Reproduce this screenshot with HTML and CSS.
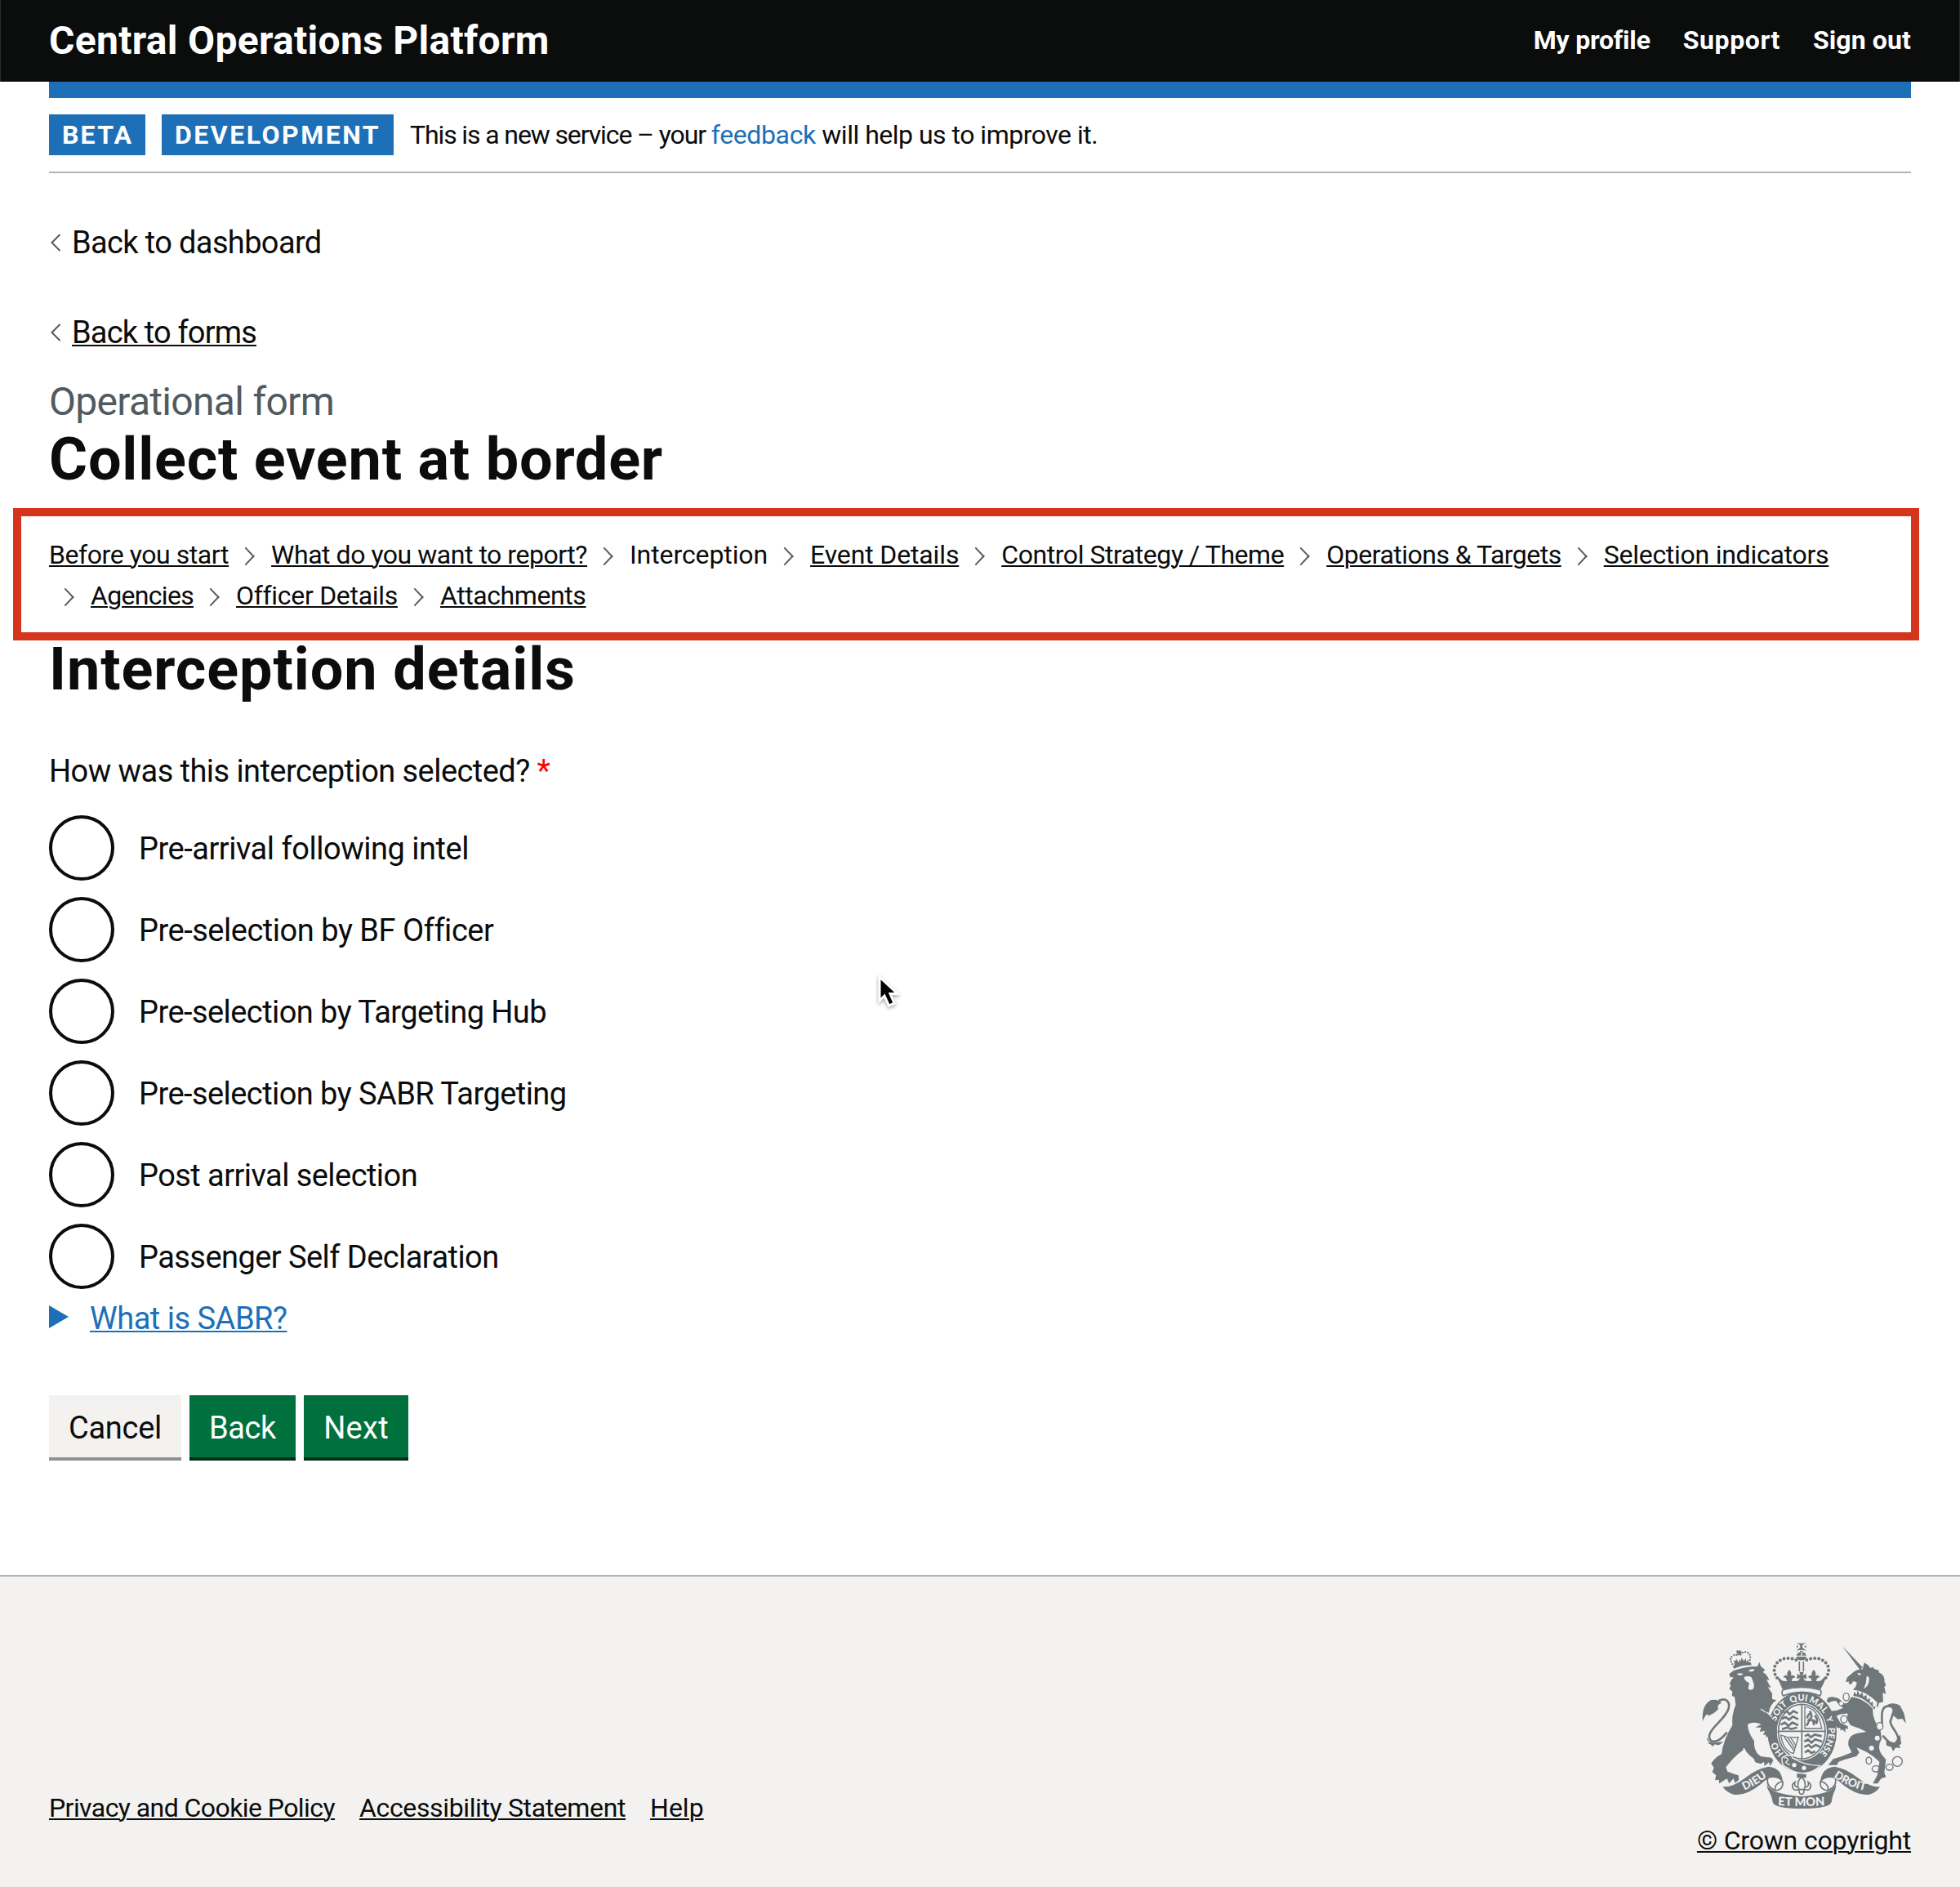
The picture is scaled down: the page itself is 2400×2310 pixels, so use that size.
FILE: index.html
```html
<!DOCTYPE html>
<html lang="en">
<head>
<meta charset="utf-8">
<title>Central Operations Platform</title>
<link rel="stylesheet" href="styles.css">
</head>
<body>
<header class="header">
  <a class="brand">Central Operations Platform</a>
  <nav class="nav"><a>My profile</a><a>Support</a><a>Sign out</a></nav>
</header>
<div class="container">
  <div class="header-bar"></div>
  <div class="phase">
    <strong class="tag tag-beta">BETA</strong>
    <strong class="tag tag-dev">DEVELOPMENT</strong>
    <span class="phase-text">This is a new service – your <a>feedback</a><span class="phase-end"> will help us to improve it.</span></span>
  </div>
  <main>
    <div class="back back-dashboard"><svg class="chev" viewBox="0 0 14 22"><path d="M12.5 1 2.5 11l10 10"/></svg><a>Back to dashboard</a></div>
    <div class="back back-forms"><svg class="chev" viewBox="0 0 14 22"><path d="M12.5 1 2.5 11l10 10"/></svg><a>Back to forms</a></div>
    <div class="caption">Operational form</div>
    <h1 class="title">Collect event at border</h1>
    <nav class="crumbs">
      <div class="crumb-row">
        <a>Before you start</a>
        <a>What do you want to report?</a>
        <span>Interception</span>
        <a>Event Details</a>
        <a>Control Strategy / Theme</a>
        <a>Operations &amp; Targets</a>
        <a>Selection indicators</a>
      </div>
      <div class="crumb-row crumb-row-next">
        <a>Agencies</a>
        <a>Officer Details</a>
        <a>Attachments</a>
      </div>
    </nav>
    <h1 class="title title-section">Interception details</h1>
    <div class="question">How was this interception selected? <span class="required">*</span></div>
    <div class="radios">
      <label class="radio"><i></i><span>Pre-arrival following intel</span></label>
      <label class="radio"><i></i><span>Pre-selection by BF Officer</span></label>
      <label class="radio"><i></i><span>Pre-selection by Targeting Hub</span></label>
      <label class="radio"><i></i><span>Pre-selection by SABR Targeting</span></label>
      <label class="radio"><i></i><span>Post arrival selection</span></label>
      <label class="radio"><i></i><span>Passenger Self Declaration</span></label>
    </div>
    <div class="details"><svg viewBox="0 0 24 28"><path d="M0 0 24 14 0 28z"/></svg><a>What is SABR?</a></div>
    <div class="buttons">
      <button class="btn btn-cancel">Cancel</button>
      <button class="btn btn-back">Back</button>
      <button class="btn btn-next">Next</button>
    </div>
  </main>
</div>
<footer class="footer">
  <div class="footer-links"><a>Privacy and Cookie Policy</a><a>Accessibility Statement</a><a>Help</a></div>
  <div class="crown">
    <svg class="crest" viewBox="72 60 750 612">
      <defs>
        <path id="garter" d="M438 497A99 112 0 0 1 339 388A99 112 0 0 1 438 276A99 112 0 0 1 537 388A99 112 0 0 1 438 497"/>
        <path id="scrollL" d="M206 614Q268 592 330 540"/>
        <path id="scrollM" d="M335 659Q437 667 540 659"/>
        <path id="scrollR" d="M540 544Q606 596 690 610"/>
      </defs>
      <!-- lion: crown -->
      <path class="dots s6" d="M190 150Q168 122 184 112Q197 102 207 112M245 136Q256 108 240 99Q226 92 211 108"/>
      <path d="M186 152Q218 134 252 136L254 146Q220 145 192 160zM192 146l-2-20 6 4 4-8 5 14 6-12 4 8 2-14 9 12 7-10 2 14 6-10 3 18q-32-2-52 10zM202 90l6 4 5-6 2 8 8 1-7 5 1 9-8-4-7 4 1-9-6-5z"/>
      <path class="line bgline w4" d="M190 161Q220 146 256 148"/>
      <!-- lion: head, body and legs -->
      <path d="M172 178 188 166Q230 150 276 150L283 134 288 149 304 163 296 171Q312 180 319 200L309 198 325 228 314 226 330 250V270L346 274Q322 288 318 320L302 314Q320 330 334 350L347 384Q352 402 338 414L335 404 327 419 320 404 308 412 308 400 296 402 304 386 284 390 290 374 268 374 290 362Q262 350 240 362Q240 390 264 424Q262 452 276 470L288 480 312 484Q330 482 334 496L322 516 318 502 302 516 300 500 288 508 268 502 262 488Q240 472 232 458Q226 440 222 458Q190 480 160 520L166 536 186 544 206 550 208 566 194 578 188 562 172 580 164 562 136 580 134 566 120 568 124 550 110 538 116 522 106 506Q118 486 144 472Q150 420 184 366Q180 330 196 290L192 262 182 258 184 242 172 232 178 222 174 212Q178 202 188 190L176 190z"/>
      <path class="bg" d="M200 178q12-6 24 0-12 10-24 0zM242 166q12-10 24-4-8 12-24 4zM226 190q14-8 28 0l6 16q8 20-2 28-12 6-16-4l4-20q-14-2-20-20z"/>
      <path class="line bgline w4" d="M288 306Q318 326 334 346L350 384"/>
      <path class="line w8" d="M134 276C160 262 176 280 170 304C160 342 104 372 99 404C96 432 128 438 164 392"/>
      <path d="M74 352C74 318 76 290 104 274Q130 268 144 284Q126 290 132 306Q118 324 94 332 96 322 88 328 82 334 74 352zM90 410Q100 432 116 430L150 426Q136 444 120 436L110 444Q110 438 94 432L100 426Q88 424 90 410z"/>
      <!-- imperial crown -->
      <path d="M420 62q18 6 34 0v30q-16-6-34 0zM432 92h11v6h-11zM419 111a19 17 0 0 1 37 0v5a19 15 0 0 1-37 0z"/>
      <path class="bg" d="M419 61l14 12v7l-14 12v-8l7-7-7-7zM455 61l-14 12v7l14 12v-8l-7-7 7-7z"/>
      <path class="line bgline w4" d="M418 112h39M438 94v18"/>
      <path class="dots s12" d="M418 126C380 112 350 124 339 152C334 170 342 188 358 203M457 126C495 112 525 124 536 152C541 170 533 188 517 203"/>
      <path class="line w5" d="M430 132v36M445 132v36M348 190q18 10 22 30M527 190q-18 10-22 30"/>
      <path d="M348 190Q362 206 385 204L380 192 370 190Q376 178 386 184 382 172 393 162 403 172 399 184 410 178 415 190L404 194 402 204 424 203 434 192 420 196 423 176 434 184 430 170h16l-4 14 12-8 3 20-14-4 10 11 22 1-2-10-11-4Q466 178 476 184 472 172 483 162 493 172 489 184 500 178 505 190L496 192 491 204Q515 206 528 190 520 214 508 234 438 214 368 234 358 210 348 190z"/>
      <path class="line w5" d="M370 236Q438 216 506 236 514 242 506 258Q438 232 370 258 362 244 370 236z"/>
      <!-- garter and shield -->
      <ellipse cx="440" cy="391" rx="127" ry="149"/>
      <ellipse class="bg" cx="439" cy="389" rx="92" ry="106"/>
      <ellipse class="line w5" cx="439" cy="389" rx="86" ry="100"/>
      <path class="line w5" d="M439 288v206M351 388h176"/>
      <path class="line w8" d="M372 322l12-8 10 12 14-12 16 8M366 342l14-6 12 10 14-12 20 10M362 364l14-8 14 12 14-12 22 10M366 380l20-6 14 6 22-6M450 406l12-6 10 10 14-10 26 6M448 426l14-8 12 12 14-12 26 8M448 446l16-8 10 10 16-10 18 8M450 466l12-8 12 10 14-6"/>
      <path class="line w4" d="M450 298q50 6 62 80h-62zM362 402q8 56 46 68l18-60q-36 4-64-8zM374 408l38 54M386 410l28 42M398 412l20 30"/>
      <path class="line w8" d="M458 340q6-20 14-14 8 8-6 20l16 2 14 12M480 348l4 18M466 350l-10 18M474 326l-6-12M494 358q4-18-8-28"/>
      <text class="motto" font-size="33"><textPath href="#garter" startOffset="15%">HO</textPath></text>
      <text class="motto" font-size="33"><textPath href="#garter" startOffset="36%">SOIT</textPath></text>
      <text class="motto" font-size="33"><textPath href="#garter" startOffset="48.5%">QUI</textPath></text>
      <text class="motto" font-size="33"><textPath href="#garter" startOffset="59.5%">MAL</textPath></text>
      <text class="motto" font-size="33"><textPath href="#garter" startOffset="69%">Y</textPath></text>
      <text class="motto" font-size="33"><textPath href="#garter" startOffset="81%">PENSE</textPath></text>
      <path d="M304 316Q330 335 344 368L349 388Q350 404 338 414L333 402 326 417 318 404 306 404z"/>
      <path class="edge" d="M366 486Q380 472 402 478L404 486Q450 514 506 514 480 542 438 542 410 540 382 520 364 516 366 486z"/>
      <path class="line bgline w4" d="M374 486q14-4 14 8l-8 8q8 10 16 8"/>
      <circle class="bg" cx="411" cy="512" r="8"/><circle class="bg" cx="447" cy="523" r="8"/>
      <!-- unicorn -->
      <path d="M588 76 663 154 652 162zM600 206 606 190 622 176Q640 160 662 160L668 136 684 146 690 156 700 152 706 160 722 164 722 172Q746 184 742 204L748 220 742 224 748 252 736 246 738 280 722 284 718 300Q680 262 636 250L628 234Q642 222 640 208L628 204 620 216 610 212 614 206z"/>
      <path class="bg" d="M642 174l16 2-8 8zM676 190q8-10 10 4 2 26-20 38 12-22 10-42zM630 236q48 6 86 46l-4 22q-40-38-86-48z"/>
      <path d="M632 242l8 12 4-16 8 18 9-12 4 18 11-8 2 18 11-6 0 18 11-4 0 18 10 0-4 10Q670 262 628 258z"/>
      <path d="M622 262Q670 270 700 306 696 340 728 386L732 416Q712 450 736 478L748 492 742 540 748 556 730 562 718 580H700L716 550 724 500Q700 476 672 462 650 452 640 448L650 466 640 480 596 492 574 500 568 512H536L554 490 580 482 622 466 610 440Q606 404 640 396L676 390Q650 376 618 366 600 340 608 326L596 306 578 294 564 276 548 278 538 284 530 276 536 264 552 262 572 266 596 286 606 284z"/>
      <path d="M546 314l20-2 32-12 12 22-32 4-12 6 14 24 28 14 0 10-10-2 2 14-12-10-6 4-2-10-10 0-10-14-8-18z"/>
      <path class="line w8" d="M734 376C732 330 728 292 760 296C790 298 770 330 764 352C768 380 798 396 794 426C790 446 770 444 736 404"/>
      <path d="M754 290Q780 280 800 294L814 322 822 360 808 342 792 344 770 326 776 308zM800 400 804 434 796 440 802 450 784 448 774 462 768 446 750 440 748 424 780 430z"/>
      <g class="chain"><ellipse cx="602" cy="262" rx="11" ry="14"/><ellipse class="bg" cx="594" cy="344" rx="12" ry="13"/><ellipse class="bg" cx="725" cy="370" rx="12" ry="14"/><ellipse cx="685" cy="496" rx="10" ry="13"/><ellipse cx="711" cy="526" rx="14" ry="11"/><ellipse cx="761" cy="520" rx="13" ry="11"/><circle cx="790" cy="499" r="18"/></g>
      <circle class="bg" cx="716" cy="413" r="9"/><circle class="bg" cx="695" cy="450" r="9"/><circle class="bg" cx="584" cy="286" r="7"/>
      <!-- pendant -->
      <path d="M421 543l34 3v13h-34z"/>
      <path class="line w5" d="M438 556q-18 16-12 38-18-2-12-20-16 10-6 26 8 8 20 0l2 14q8 12 16 0l2-14q12 8 20 0 10-16-6-26 6 18-12 20 6-22-12-38zM422 602h32"/>
      <!-- motto scroll -->
      <path d="M148 592Q186 594 230 560 274 524 316 518 346 520 360 542 368 556 370 578 354 552 318 560 302 568 284 586 230 628 188 620 164 614 148 592zM726 592Q690 594 646 560 602 524 560 518 530 520 516 542 508 556 506 578 522 552 558 560 574 568 592 586 646 628 688 620 712 614 726 592z"/>
      <path class="line w5" d="M314 560Q306 592 344 606 374 600 368 572 350 576 342 590 338 600 344 606M562 560Q570 592 532 606 502 600 508 572 526 576 534 590 538 600 532 606"/>
      <path d="M310 582Q320 618 438 628 556 618 564 582 566 598 556 614 550 630 548 648 540 672 438 672 338 672 332 648 330 630 320 612 310 598 310 582z"/>
      <text class="motto" font-size="41"><textPath href="#scrollL" startOffset="50%">DIEU</textPath></text>
      <text class="motto" font-size="44"><textPath href="#scrollM" startOffset="50%">ET MON</textPath></text>
      <text class="motto" font-size="41"><textPath href="#scrollR" startOffset="50%">DROIT</textPath></text>
    </svg>
    <a class="copyright">© Crown copyright</a>
  </div>
</footer>
<svg class="cursor" viewBox="0 0 30 44"><path d="M4 4v29l6-6 5.500 12 6.500-3-5-11.500h9z"/></svg>
</body>
</html>
```
FILE: styles.css
```css
* { box-sizing: border-box; }
body { margin: 0; width: 2400px; height: 2310px; overflow: hidden; background: #fff; color: #0b0c0c; font: 400 38px/50px Roboto, "Liberation Sans", sans-serif; display: flex; flex-direction: column; }
a, span, strong { white-space: pre; }
h1 { margin: 0; }

.header { height: 100px; background: #0b0c0c; color: #fff; font-weight: 700; display: flex; justify-content: space-between; line-height: 100px; border: solid #2a2b2b; border-width: 0 1px; padding: 0 59px; }
.brand { font-size: 48px; letter-spacing: .3px; }
.nav { display: flex; gap: 40px; font-size: 32px; line-height: 98px; }
.nav a:nth-child(1) { letter-spacing: -.2px; }
.nav a:nth-child(2) { letter-spacing: .6px; }
.nav a:nth-child(3) { letter-spacing: .11px; }

.container { margin: 0 60px; height: 1828px; }
.header-bar { height: 20px; background: #1d70b8; }
.phase { height: 92px; border-bottom: 2px solid #b1b4b6; padding-top: 20px; display: flex; gap: 20px; font-size: 32px; }
.tag { height: 50px; background: #1d70b8; color: #fff; padding-left: 16px; font-weight: 700; }
.tag-beta { width: 118px; letter-spacing: 2.2px; }
.tag-dev { width: 284px; letter-spacing: 2.5px; }
.phase-text { letter-spacing: -1.12px; }
.phase-text a { color: #1d70b8; letter-spacing: -.37px; }
.phase-end { letter-spacing: -.5px; }

.back { height: 50px; display: flex; align-items: center; }
.back a { line-height: 52px; }
.chev { width: 14px; height: 22px; margin: 0 13px 0 1px; fill: none; stroke: #505a5f; stroke-width: 2; }
.back-dashboard { margin-top: 60px; letter-spacing: -.63px; }
.back-forms { margin-top: 60px; letter-spacing: -.83px; }
.back-forms a, .crumbs a, .details a, .footer a { text-decoration: underline; text-decoration-thickness: 2px; text-underline-offset: 2px; }
.caption { margin-top: 30px; font-size: 48px; line-height: 60px; color: #505a5f; letter-spacing: -.7px; }
.title { margin-top: 3px; font-size: 72px; line-height: 76px; font-weight: 700; letter-spacing: .79px; }

.crumbs { height: 162px; margin: 21px -10px 0 -44px; padding: 27px 34px 0; border: 10px solid #d4351c; font-size: 32px; line-height: 40px; display: flex; flex-direction: column; gap: 10px; }
.crumb-row { display: flex; gap: 52px; }
.crumb-row > * { position: relative; }
.crumb-row > * + *::before, .crumb-row-next > *::before { content: ""; position: absolute; left: -39px; top: 14px; width: 14px; height: 14px; border: solid #505a5f; border-width: 2px 2px 0 0; transform: scaleX(.95) rotate(45deg); }
.crumb-row-next { padding-left: 51px; }
.crumb-row a:nth-child(1) { letter-spacing: -.43px; }
.crumb-row a:nth-child(2) { letter-spacing: -.47px; }
.crumb-row span { letter-spacing: -.1px; }
.crumb-row a:nth-child(4) { letter-spacing: -.14px; }
.crumb-row a:nth-child(5) { letter-spacing: -.44px; }
.crumb-row a:nth-child(6) { letter-spacing: -.51px; }
.crumb-row a:nth-child(7) { letter-spacing: -.26px; }
.crumb-row-next a:nth-child(1) { letter-spacing: -.69px; }
.crumb-row-next a:nth-child(2) { letter-spacing: -.3px; }
.crumb-row-next a:nth-child(3) { letter-spacing: -.41px; }

.title-section { margin-top: -2px; letter-spacing: .9px; }
.question { margin-top: 61px; letter-spacing: -.56px; }
.required { color: #f00; }
.radios { margin-top: 29px; display: flex; flex-direction: column; gap: 20px; letter-spacing: -.56px; }
.radio { display: flex; height: 80px; gap: 30px; line-height: 83px; }
.radio i { width: 80px; border: 4px solid #0b0c0c; border-radius: 50%; }
.radio:nth-child(1) { letter-spacing: -.48px; }
.radio:nth-child(2) { letter-spacing: -.48px; }

.details { margin-top: 10px; display: flex; color: #1d70b8; letter-spacing: -.49px; }
.details a { line-height: 52px; height: 50px; }
.details svg { width: 24px; height: 28px; margin: 10px 26px 0 0; fill: #1d70b8; }
.buttons { margin-top: 70px; display: flex; gap: 10px; }
.btn { height: 76px; border: 0; padding: 3px 0 0; font: inherit; color: #fff; background: #00703c; box-shadow: 0 4px 0 #002d18; }
.btn-cancel { width: 162px; background: #f3f2f1; color: #0b0c0c; box-shadow: 0 4px 0 #929191; letter-spacing: -.28px; }
.btn-back { width: 130px; letter-spacing: -.38px; }
.btn-next { width: 128px; letter-spacing: .3px; }

.footer { height: 382px; background: #f3f2f1; border-top: 2px solid #b1b4b6; padding: 0 60px; display: flex; justify-content: space-between; font-size: 32px; line-height: 40px; }
.footer-links { display: flex; gap: 30px; padding-top: 263px; }
.footer-links a:nth-child(1) { letter-spacing: -.57px; }
.footer-links a:nth-child(2) { letter-spacing: -.37px; }
.crown { display: flex; flex-direction: column; align-items: flex-end; padding-top: 80px; }
.crest { width: 250px; height: 204px; margin: 0 6px 19px 0; fill: #6f777b; }
.copyright { letter-spacing: -.17px; }
.crest .bg { fill: #f3f2f1; }
.crest .line, .crest .dots { fill: none; stroke: #6f777b; }
.crest .bgline { stroke: #f3f2f1; }
.crest .edge { stroke: #f3f2f1; stroke-width: 4; }
.w4 { stroke-width: 4; }
.w5 { stroke-width: 5; }
.w8 { stroke-width: 8; }
.crest .dots { stroke-linecap: round; }
.s6 { stroke-width: 7; stroke-dasharray: 0 10; }
.s12 { stroke-width: 12; stroke-dasharray: 0 15; }
.chain { fill: none; stroke: #6f777b; stroke-width: 4; }
.motto { fill: #f3f2f1; font-family: Lato, sans-serif; font-weight: 900; text-anchor: middle; }

.cursor { position: absolute; left: 1073px; top: 1192px; width: 30px; height: 44px; fill: #000; stroke: #fff; stroke-width: 3; overflow: visible; filter: drop-shadow(0 2px 2px rgba(0, 0, 0, .35)); }
```
